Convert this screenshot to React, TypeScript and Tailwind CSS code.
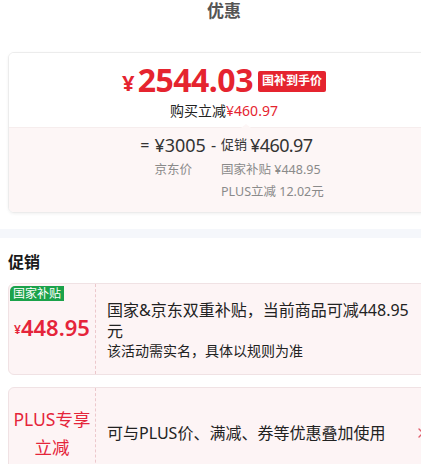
import React from 'react';

const FONT = "font-['Noto_Sans','Noto_Sans_CJK_SC',sans-serif]";

function Chevron() {
  return (
    <svg width="8" height="12" viewBox="0 0 8 12" fill="none">
      <path d="M2 2l4 4-4 4" stroke="#e0606e" strokeWidth="1.4" strokeLinecap="round" strokeLinejoin="round" />
    </svg>
  );
}

export default function App() {
  return (
    <div className={`w-[421px] h-[464px] overflow-hidden bg-white ${FONT}`}>
      <div className="w-[448px]">
        {/* 优惠 */}
        <div className="h-[20px] flex items-center justify-center text-[17px] font-bold text-[#555] leading-none">
          优惠
        </div>

        <div className="px-2 pt-[32px] pb-[16px]">
          <div className="rounded-[6px] border border-[#ececec] shadow-[0_1px_3px_rgba(0,0,0,0.06)] overflow-hidden">
            <div className="relative bg-white flex flex-col items-center pt-[11px] pb-[7px]">
              <div className="flex items-center leading-none">
                <span className="text-[22px] font-bold text-[#e5242f] mr-[3px] mt-[3px]">¥</span>
                <span className="text-[32px] font-bold text-[#e5242f] tracking-[-0.5px]">2544.03</span>
                <span className="ml-[5px] mt-[2px] bg-[#e5242f] text-white text-[12px] font-bold px-[4px] h-[21px] flex items-center rounded-[2px]">
                  国补到手价
                </span>
              </div>
              <div className="mt-[6px] text-[14px] leading-[18px] text-[#222]">
                购买立减<span className="text-[#e5242f]">¥460.97</span>
              </div>
              <div className="absolute bottom-[-1px] left-[232px] w-0 h-0 border-l-[5px] border-r-[5px] border-b-[4px] border-l-transparent border-r-transparent border-b-[#fdf6f6]" />
            </div>
            <div className="bg-[#fdf6f6] border-t border-[#f6eded] flex justify-center pl-[16px] pt-[6px] pb-[11px]">
              <div className="flex text-[#333]">
                <div className="flex">
                  <span className="text-[16px] h-[22px] flex items-center mr-[5px]">=</span>
                  <div className="flex flex-col">
                    <span className="text-[18px] h-[22px] flex items-center">¥3005</span>
                    <div className="text-[12.5px] text-[#8a8a8a] mt-[5px] leading-[18px]">京东价</div>
                  </div>
                </div>
                <div className="flex ml-[5px]">
                  <span className="text-[16px] h-[22px] flex items-center mr-[5px]">-</span>
                  <div className="flex flex-col">
                    <div className="flex items-center h-[22px]">
                      <span className="text-[13px] mr-[3px]">促销</span>
                      <span className="text-[18px] tracking-[-0.6px]">¥460.97</span>
                    </div>
                    <div className="text-[12.5px] text-[#8a8a8a] mt-[5px] leading-[18px]">国家补贴 ¥448.95</div>
                    <div className="text-[12.5px] text-[#8a8a8a] mt-[4px] leading-[18px]">PLUS立减 12.02元</div>
                  </div>
                </div>
              </div>
            </div>
          </div>
        </div>

        <div className="h-[9px] bg-[#f5f7fb]" />

        {/* 促销 */}
        <div className="px-2 pt-[14px] pb-[11px] text-[16px] font-bold text-[#1a1a1a] leading-[20px]">促销</div>

        <div className="px-2">
          <div className="relative flex rounded-[6px] border border-[#f0e2e4] bg-[#fdf4f5] h-[92px]">
            <div className="absolute left-[1px] top-[2px] bg-[#1ba24a] text-white text-[12px] leading-[15px] px-[3px] rounded-tl-[5px]">
              国家补贴
            </div>
            <div className="w-[87px] shrink-0 flex items-center justify-center pb-[4px] border-r border-dashed border-[#ecc8cc]">
              <span className="text-[#e5243a] text-[12px] font-semibold mt-[5px]">¥</span>
              <span className="text-[#e5243a] text-[22px] font-semibold">448.95</span>
            </div>
            <div className="flex-1 pl-[11px] pr-[20px] pt-[16px] text-[#222]">
              <div className="text-[16px] leading-[21px]">国家&amp;京东双重补贴，当前商品可减448.95元</div>
              <div className="text-[14px] leading-[19px] mt-[-1px]">该活动需实名，具体以规则为准</div>
            </div>
          </div>

          <div className="mt-[12px] flex rounded-[6px] border border-[#f0e2e4] bg-[#fdf4f5] h-[92px]">
            <div className="w-[87px] shrink-0 flex flex-col items-center justify-center border-r border-dashed border-[#ecc8cc] text-[#e5243a] text-[17.5px] leading-[28px]">
              <span>PLUS专享</span>
              <span>立减</span>
            </div>
            <div className="flex-1 flex items-center pl-[11px] pr-[14px] text-[#222]">
              <span className="text-[16px] flex-1">可与PLUS价、满减、券等优惠叠加使用</span>
              <Chevron />
            </div>
          </div>
        </div>
      </div>
    </div>
  );
}
